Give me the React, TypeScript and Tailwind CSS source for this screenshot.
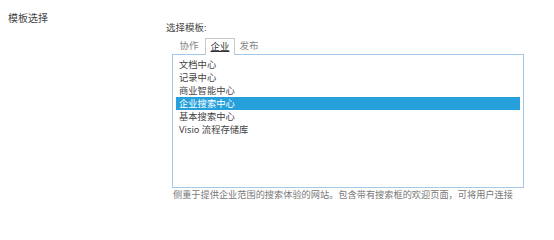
import React from "react";

const templates = ["文档中心", "记录中心", "商业智能中心", "企业搜索中心", "基本搜索中心", "Visio 流程存储库"];

export default function App() {
    const selected = 3;
    return (
        <div className="flex w-[554px] h-[201px] overflow-hidden bg-white text-[#444] font-['Noto_Sans','Noto_Sans_CJK_SC',sans-serif]">
            <div className="w-[166px] shrink-0 pl-[8px] pt-[12px] text-[10px] leading-[12px]">模板选择</div>
            <div className="flex flex-col pt-[22px]">
                <div className="shrink-0 text-[9.5px] leading-[12px]">选择模板:</div>
                <div className="flex shrink-0 mt-[4px] ml-[7px] -mb-px relative z-10 text-[9.5px]">
                    <div className="w-[32px] h-[17px] flex items-center justify-center text-[#888]">协作</div>
                    <div className="w-[30px] h-[17px] flex items-center justify-center border border-b-0 border-[#c8c8c8] bg-white text-[#333]">
                        <span className="underline underline-offset-[1px]">企业</span>
                    </div>
                    <div className="w-[28px] h-[17px] flex items-center justify-center text-[#888]">发布</div>
                </div>
                <ul className="shrink-0 ml-[6px] w-[352px] h-[134px] border border-[#a3c7e6] p-[3px] text-[9.3px] leading-[13px]">
                    {templates.map((t, i) => (
                        <li key={t} className={i === selected ? "h-[13px] pl-[3px] bg-[#26a0da] text-white" : "h-[13px] pl-[3px]"}>
                            {t}
                        </li>
                    ))}
                </ul>
                <p className="shrink-0 ml-[7px] mt-[1px] w-[340px] text-[9.2px] leading-[11px] text-[#777]">
                    侧重于提供企业范围的搜索体验的网站。包含带有搜索框的欢迎页面，可将用户连接到搜索结果页面和高级搜索页面。
                </p>
            </div>
        </div>
    );
}
